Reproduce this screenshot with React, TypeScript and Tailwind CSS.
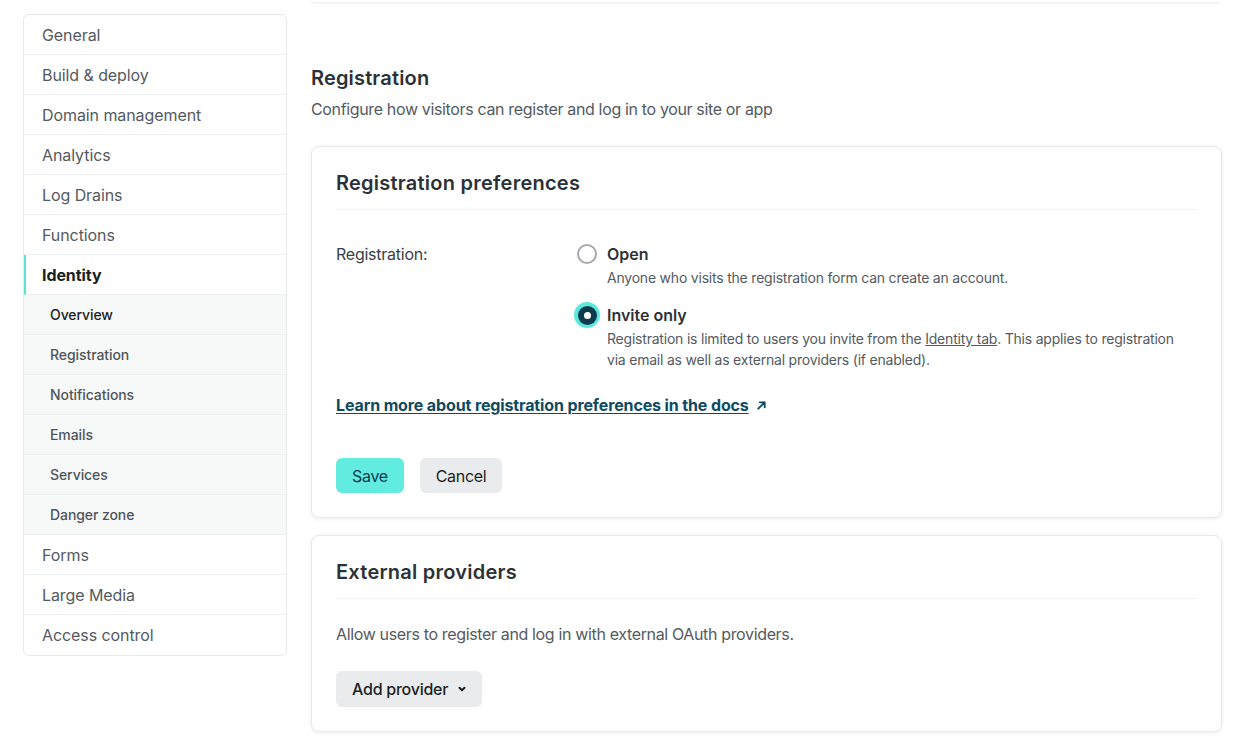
import React from 'react';

const navTop = ['General', 'Build & deploy', 'Domain management', 'Analytics', 'Log Drains', 'Functions'];
const navSub = ['Overview', 'Registration', 'Notifications', 'Emails', 'Services', 'Danger zone'];
const navBottom = ['Forms', 'Large Media', 'Access control'];

function Sidebar() {
  return (
    <nav className="w-[264px] shrink-0 mt-[14px] self-start rounded-md border border-[#e6e8ea] bg-white overflow-hidden tracking-[-0.005em]">
      {navTop.map((item) => (
        <div key={item} className="h-10 flex items-center px-[18px] border-b border-[#eceef0] text-[16px] text-[#545a61]">
          {item}
        </div>
      ))}
      <div className="h-10 flex items-center px-[18px] border-b border-[#eceef0] border-l-2 border-l-[#5ce2d6] text-[16px] font-bold text-[#1c1f23]">
        <span className="-ml-[2px]">Identity</span>
      </div>
      {navSub.map((item, i) => (
        <div
          key={item}
          className={`h-10 flex items-center pl-[26px] border-b border-[#eceef0] bg-[#f7f8f8] text-[14px] font-medium ${
            i === 0 ? 'text-[#1c1f23]' : 'text-[#4f555b]'
          }`}
        >
          {item}
        </div>
      ))}
      {navBottom.map((item, i) => (
        <div
          key={item}
          className={`h-10 flex items-center px-[18px] text-[16px] text-[#545a61] ${
            i < navBottom.length - 1 ? 'border-b border-[#eceef0]' : ''
          }`}
        >
          {item}
        </div>
      ))}
    </nav>
  );
}

function Radio({ checked }: { checked: boolean }) {
  if (checked) {
    return (
      <span className="w-[26px] h-[26px] -m-[3px] rounded-full bg-[#5ce8dc] flex items-center justify-center">
        <span className="w-[19px] h-[19px] rounded-full bg-[#0e3a4e] flex items-center justify-center">
          <span className="w-[7px] h-[7px] rounded-full bg-white" />
        </span>
      </span>
    );
  }
  return <span className="block w-5 h-5 rounded-full border-2 border-[#a5a9ad] bg-white" />;
}

function Card({ title, children }: { title: string; children: React.ReactNode }) {
  return (
    <section className="rounded-lg border border-[#e8e9eb] bg-white shadow-[0_1px_4px_rgba(0,0,0,0.08)] px-6 pt-[22px] pb-6">
      <h2 className="text-[20px] leading-7 font-semibold tracking-[0.012em] text-[#2d3136] pb-3 border-b border-[#f0f1f2]">{title}</h2>
      {children}
    </section>
  );
}

export default function App() {
  return (
    <div className="min-h-[743px] bg-white flex gap-6 pl-[23px] pr-[22px]" style={{ fontFamily: 'Inter, "Noto Sans", sans-serif' }}>
      <Sidebar />
      <main className="flex-1 min-w-0">
        <div className="h-[3px] rounded-b-lg bg-white border-b border-[#f0f1f2] shadow-[0_1px_3px_rgba(0,0,0,0.05)]" />
        <h1 className="mt-[61px] text-[20px] leading-7 font-semibold tracking-[0.008em] text-[#2d3136]">Registration</h1>
        <p className="mt-[5px] text-[16px] leading-6 tracking-[-0.022em] text-[#545a61]">Configure how visitors can register and log in to your site or app</p>

        <div className="mt-[25px] flex flex-col gap-[17px]">
          <Card title="Registration preferences">
            <div className="mt-[32px] flex">
              <div className="w-[241px] shrink-0 text-[16px] leading-6 tracking-[-0.015em] text-[#3a3f45]">Registration:</div>
              <div className="flex flex-col gap-[15px]">
                <div className="flex gap-[10px]">
                  <div className="pt-[2px]">
                    <Radio checked={false} />
                  </div>
                  <div>
                    <div className="text-[16px] leading-6 font-semibold text-[#2d3136]">Open</div>
                    <div className="mt-[2px] text-[14px] leading-5 tracking-[-0.015em] text-[#545a61]">Anyone who visits the registration form can create an account.</div>
                  </div>
                </div>
                <div className="flex gap-[10px]">
                  <div className="pt-[2px]">
                    <Radio checked />
                  </div>
                  <div>
                    <div className="text-[16px] leading-6 font-semibold text-[#2d3136]">Invite only</div>
                    <p className="mt-[1px] text-[14px] leading-[21px] tracking-[-0.015em] text-[#545a61] max-w-[578px]">
                      Registration is limited to users you invite from the <u>Identity tab</u>. This applies to registration via email as well as external providers (if enabled).
                    </p>
                  </div>
                </div>
              </div>
            </div>
            <a href="#" className="mt-[23px] inline-flex items-center gap-[7px] text-[16px] leading-6 font-bold tracking-[-0.008em] text-[#0e4a62] underline underline-offset-2">
              Learn more about registration preferences in the docs
              <svg width="11" height="11" viewBox="0 0 12 12" fill="none" stroke="currentColor" strokeWidth="2" strokeLinecap="round" strokeLinejoin="round">
                <path d="M2.5 9.5L9.5 2.5M4 2.5h5.5V8" />
              </svg>
            </a>
            <div className="mt-[41px] flex gap-4">
              <button className="h-[35px] px-4 rounded-md bg-[#62ece0] text-[16px] tracking-[-0.02em] text-[#0e3a4e]">Save</button>
              <button className="h-[35px] px-4 rounded-md bg-[#eaebed] text-[16px] tracking-[-0.02em] text-[#1c1f23]">Cancel</button>
            </div>
          </Card>

          <Card title="External providers">
            <p className="mt-[23px] text-[16px] leading-6 tracking-[-0.022em] text-[#545a61]">Allow users to register and log in with external OAuth providers.</p>
            <button className="mt-[25px] h-9 pl-4 pr-[15px] rounded-md bg-[#eaebed] text-[16px] font-medium tracking-[-0.015em] text-[#1c1f23] inline-flex items-center gap-[9px]">
              Add provider
              <svg width="10" height="10" viewBox="0 0 10 10" fill="none" stroke="currentColor" strokeWidth="2" strokeLinecap="round" strokeLinejoin="round">
                <path d="M2.5 3.8L5 6.3l2.5-2.5" />
              </svg>
            </button>
          </Card>
        </div>
      </main>
    </div>
  );
}
